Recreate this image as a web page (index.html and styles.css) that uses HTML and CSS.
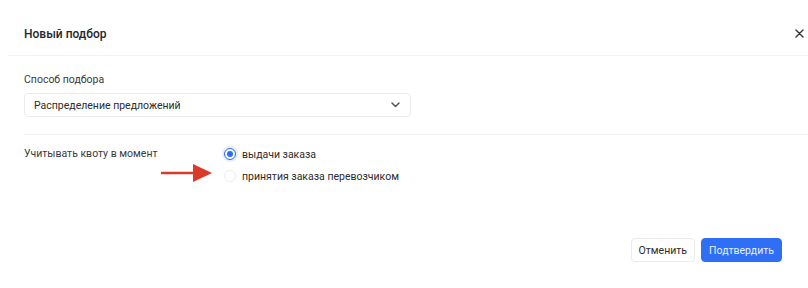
FILE: index.html
```html
<!DOCTYPE html>
<html lang="ru">
<head>
<meta charset="utf-8">
<link rel="stylesheet" href="styles.css">
</head>
<body>
<div class="modal">
  <div class="header">
    <div class="title">Новый подбор</div>
    <button class="close" aria-label="Закрыть">
      <svg width="9" height="9" viewBox="0 0 9 9"><path d="M1 1L8 8M8 1L1 8" stroke="#333" stroke-width="1.4" stroke-linecap="round"/></svg>
    </button>
  </div>
  <div class="content">
    <div class="field">
      <div class="field-label">Способ подбора</div>
      <div class="select">
        <span>Распределение предложений</span>
        <svg width="9" height="6" viewBox="0 0 9 6"><path d="M1 1L4.5 4.5L8 1" fill="none" stroke="#555" stroke-width="1.5" stroke-linecap="round" stroke-linejoin="round"/></svg>
      </div>
    </div>
    <div class="divider"></div>
    <div class="row">
      <div class="row-label">Учитывать квоту в момент</div>
      <div class="radios">
        <label class="radio checked"><span class="dot"></span><span>выдачи заказа</span></label>
        <label class="radio"><span class="dot"></span><span>принятия заказа перевозчиком</span></label>
      </div>
      <svg class="arrow" width="52" height="20" viewBox="0 0 52 20"><path d="M0 10H33" stroke="#d93a2a" stroke-width="2.4"/><path d="M32 1L51 10L32 19Z" fill="#d93a2a"/></svg>
    </div>
    <div class="footer">
      <button class="btn">Отменить</button>
      <button class="btn primary">Подтвердить</button>
    </div>
  </div>
</div>
</body>
</html>
```

FILE: styles.css
```css
* { box-sizing: border-box; }
html, body { margin: 0; padding: 0; background: #fff; }
body {
  width: 808px;
  height: 288px;
  overflow: hidden;
  font-family: Roboto, "Noto Sans", Arial, sans-serif;
  color: #2b2b2b;
  font-size: 10.5px;
}
.modal { margin-left: 8px; }
.header {
  height: 56px;
  padding: 13px 3px 0 16px;
  display: flex;
  align-items: center;
  justify-content: space-between;
  border-bottom: 1px solid #f2f2f2;
}
.title {
  font-size: 12px;
  font-weight: 500;
  color: #262626;
}
.close {
  border: 0;
  background: none;
  padding: 0;
  width: 12px;
  height: 12px;
  display: flex;
  align-items: center;
  justify-content: center;
  margin-bottom: 1px;
}
.content { padding: 16px 26px 0 16px; position: relative; }
.field-label {
  line-height: 16px;
  color: #3a3a3a;
  margin-bottom: 5px;
}
.select {
  width: 387px;
  height: 24px;
  border: 1px solid #ebebeb;
  border-radius: 4px;
  padding: 0 10px 0 9px;
  display: flex;
  align-items: center;
  justify-content: space-between;
  color: #2b2b2b;
}
.divider {
  height: 1px;
  background: #efefef;
  margin: 17px -26px 8px 0;
}
.row { display: flex; position: relative; }
.row-label {
  width: 200px;
  line-height: 22px;
  color: #3a3a3a;
}
.radios { display: flex; flex-direction: column; }
.radio {
  display: flex;
  align-items: center;
  height: 22px;
  gap: 6px;
  color: #2b2b2b;
}
.dot {
  width: 12px;
  height: 12px;
  border-radius: 50%;
  border: 1px solid #ececec;
  background: #fff;
  display: flex;
  align-items: center;
  justify-content: center;
}
.radio.checked .dot {
  border-color: #2a6cf6;
  box-shadow: 0 0 0 2px rgba(42, 108, 246, 0.12);
}
.radio.checked .dot::after {
  content: "";
  width: 6px;
  height: 6px;
  border-radius: 50%;
  background: #2a6cf6;
}
.arrow { position: absolute; left: 137px; top: 20px; }
.footer {
  display: flex;
  justify-content: flex-end;
  gap: 6px;
  margin-top: 51px;
}
.btn {
  height: 24px;
  padding: 0 7px;
  border: 1px solid #ebebeb;
  border-radius: 4px;
  background: #fff;
  font-family: inherit;
  font-size: 10.5px;
  color: #2b2b2b;
}
.btn.primary {
  background: #2f6ff6;
  border-color: #2f6ff6;
  color: #e8efff;
}
```
